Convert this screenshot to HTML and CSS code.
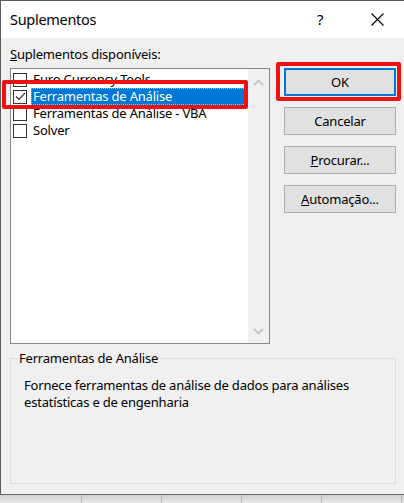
FILE: index.html
```html
<!DOCTYPE html>
<html lang="pt">
<head>
<meta charset="utf-8">
<title>Suplementos</title>
<link rel="stylesheet" href="styles.css">
</head>
<body>
<div class="screen">
  <div class="dialog">
    <div class="titlebar">
      <span class="title">Suplementos</span>
      <span class="help">?</span>
      <span class="close">
        <svg width="13" height="13" viewBox="0 0 13 13"><path d="M0.5 0.5 L12.5 12.5 M12.5 0.5 L0.5 12.5" stroke="#000" stroke-width="1.1" fill="none"/></svg>
      </span>
    </div>
    <div class="body">
      <div class="main">
        <div class="left">
          <div class="label"><u>S</u>uplementos disponíveis:</div>
          <div class="listbox">
            <div class="items">
              <div class="item"><span class="check"></span><span class="text">Euro Currency Tools</span></div>
              <div class="item selected"><span class="check checked"><svg width="11" height="11" viewBox="0 0 11 11"><path d="M1 5.5 L4 8.5 L10 2" stroke="#333" stroke-width="1.2" fill="none"/></svg></span><span class="text">Ferramentas de Análise</span></div>
              <div class="item"><span class="check"></span><span class="text">Ferramentas de Análise - VBA</span></div>
              <div class="item"><span class="check"></span><span class="text">Solver</span></div>
            </div>
            <div class="scrollbar">
              <svg width="11" height="7" viewBox="0 0 11 7"><path d="M1 6 L5.5 1.5 L10 6" stroke="#c4c4c4" stroke-width="1.8" fill="none"/></svg>
              <svg width="11" height="7" viewBox="0 0 11 7"><path d="M1 1 L5.5 5.5 L10 1" stroke="#c4c4c4" stroke-width="1.8" fill="none"/></svg>
            </div>
          </div>
        </div>
        <div class="buttons">
          <div class="btn default">OK</div>
          <div class="btn">Cancelar</div>
          <div class="btn"><u>P</u>rocurar...</div>
          <div class="btn"><u>A</u>utomação...</div>
        </div>
      </div>
      <div class="group">
        <div class="legend">Ferramentas de Análise</div>
        <p class="desc">Fornece ferramentas de análise de dados para análises estatísticas e de engenharia</p>
      </div>
    </div>
  </div>
  <div class="sheet">
    <span class="cell"></span><span class="cell"></span><span class="cell"></span><span class="cell"></span><span class="cell"></span><span class="cell"></span>
  </div>
  <div class="mark mark-item"></div>
  <div class="mark mark-ok"></div>
</div>
</body>
</html>
```
FILE: styles.css
```css
* { box-sizing: border-box; }
html, body { margin: 0; padding: 0; }
body {
  font-family: "Noto Sans", "Open Sans", sans-serif;
  font-size: 13px;
  letter-spacing: -0.2px;
  color: #000;
  background: #e6e6e6;
}
.screen {
  position: relative;
  width: 404px;
  height: 503px;
  overflow: hidden;
}
.dialog {
  height: 495px;
  border-top: 1px solid #5a5a5a;
  border-left: 1px solid #5a5a5a;
  border-bottom: 1px solid #6a6a6a;
  background: #f0f0f0;
  display: flex;
  flex-direction: column;
}
.titlebar {
  height: 37px;
  background: #fff;
  display: flex;
  align-items: center;
  padding-left: 9px;
}
.title {
  font-size: 14.5px;
  letter-spacing: -0.3px;
  flex: 1;
  padding-bottom: 2px;
}
.help {
  font-size: 15px;
  width: 54px;
  padding-bottom: 2px;
}
.close {
  width: 33px;
  display: flex;
  padding-bottom: 1px;
}
.body {
  flex: 1;
  padding: 7px 8px 0 9px;
}
.main {
  display: flex;
}
.left {
  width: 260px;
}
.label {
  height: 23px;
}
.listbox {
  height: 276px;
  border: 1px solid #828790;
  background: #fff;
  display: flex;
}
.items {
  flex: 1;
  padding: 2px 2px 0 2px;
}
.item {
  height: 17px;
  display: flex;
  align-items: center;
}
.check {
  width: 14px;
  height: 14px;
  border: 1px solid #333;
  background: #fff;
  margin-right: 4px;
  display: flex;
  align-items: center;
  justify-content: center;
}
.text {
  height: 17px;
  line-height: 17px;
  padding: 0 2px;
}
.item.selected .text {
  flex: 1;
  background: #0078d7;
  color: #fff;
  outline: 1px dotted #f7b43a;
  outline-offset: -1px;
}
.scrollbar {
  width: 21px;
  background: #f0f0f0;
  display: flex;
  flex-direction: column;
  justify-content: space-between;
  align-items: center;
  padding: 10px 0 8px;
}
.buttons {
  margin-left: 14px;
  padding-top: 23px;
  display: flex;
  flex-direction: column;
  gap: 11px;
}
.btn {
  width: 112px;
  height: 28px;
  border: 1px solid #adadad;
  background: #e1e1e1;
  display: flex;
  align-items: center;
  justify-content: center;
}
.btn.default {
  border: 2px solid #0078d7;
}
.group {
  margin-top: 14px;
  width: 386px;
  height: 126px;
  border: 1px solid #dcdcdc;
  position: relative;
  padding: 18px 13px 0;
}
.legend {
  position: absolute;
  top: -10px;
  left: 7px;
  padding: 0 1px;
  background: #f0f0f0;
}
.desc {
  margin: 0;
  line-height: 17px;
}
.sheet {
  height: 8px;
  display: flex;
  background: linear-gradient(#cfcfcf, #e9e9e9);
}
.cell {
  width: 80px;
  flex: none;
  border-right: 1px solid #b8b8b8;
}
.cell:first-child { width: 82px; }
.mark {
  position: absolute;
  border: 4px solid #ee1111;
  border-radius: 2px;
}
.mark-item {
  left: 2px;
  top: 80px;
  width: 246px;
  height: 29px;
}
.mark-ok {
  left: 276px;
  top: 62px;
  width: 125px;
  height: 39px;
}
```
